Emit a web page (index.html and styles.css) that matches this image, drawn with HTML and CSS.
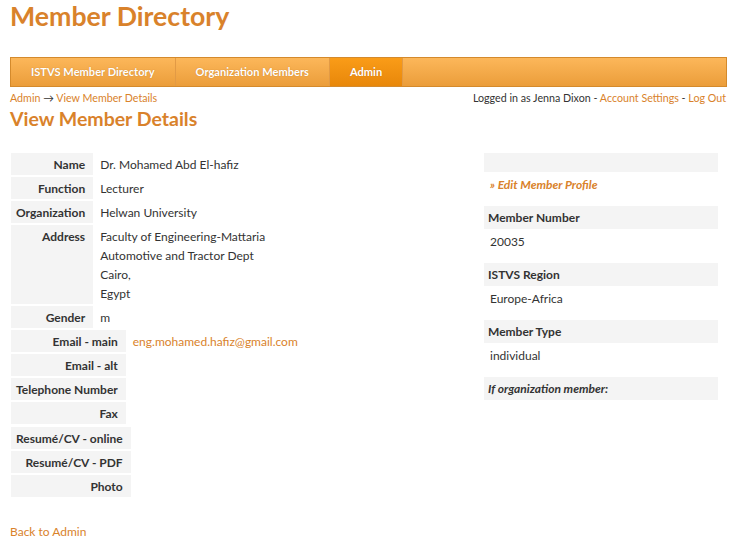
FILE: index.html
```html
<!DOCTYPE html>
<html lang="en">
<head>
    <meta charset="UTF-8">
    <title>Member Directory</title>
    <link rel="stylesheet" href="styles.css">
</head>
<body>
    <div class="page">
        <h1 class="site-title">Member Directory</h1>

        <ul class="main-nav">
            <li><a href="#">ISTVS Member Directory</a></li>
            <li><a href="#">Organization Members</a></li>
            <li class="active"><a href="#">Admin</a></li>
        </ul>

        <div class="topbar">
            <div class="breadcrumb"><a href="#">Admin</a> &rarr; <a href="#">View Member Details</a></div>
            <div class="user-info">Logged in as Jenna Dixon - <a href="#">Account Settings</a> - <a href="#">Log Out</a></div>
        </div>

        <h2 class="page-title">View Member Details</h2>

        <div class="details">
            <div class="details-main">
                <table class="info-table">
                    <tr><th>Name</th><td>Dr. Mohamed Abd El-hafiz</td></tr>
                    <tr><th>Function</th><td>Lecturer</td></tr>
                    <tr><th>Organization</th><td>Helwan University</td></tr>
                    <tr><th>Address</th><td>Faculty of Engineering-Mattaria<br>Automotive and Tractor Dept<br>Cairo,<br>Egypt</td></tr>
                    <tr><th>Gender</th><td>m</td></tr>
                </table>
                <table class="info-table">
                    <tr><th>Email - main</th><td><a href="#">eng.mohamed.hafiz@gmail.com</a></td></tr>
                    <tr><th>Email - alt</th><td></td></tr>
                    <tr><th>Telephone Number</th><td></td></tr>
                    <tr><th>Fax</th><td></td></tr>
                </table>
                <table class="info-table last">
                    <tr><th>Resumé/CV - online</th><td></td></tr>
                    <tr><th>Resumé/CV - PDF</th><td></td></tr>
                    <tr><th>Photo</th><td></td></tr>
                </table>
            </div>

            <div class="details-side">
                <div class="side-head empty"></div>
                <div class="side-value"><a class="edit-link" href="#">&raquo; Edit Member Profile</a></div>

                <div class="side-head">Member Number</div>
                <div class="side-value">20035</div>

                <div class="side-head">ISTVS Region</div>
                <div class="side-value">Europe-Africa</div>

                <div class="side-head">Member Type</div>
                <div class="side-value">individual</div>

                <div class="side-head italic">If organization member:</div>
            </div>
        </div>

        <p class="back"><a href="#">Back to Admin</a></p>
    </div>
</body>
</html>
```

FILE: styles.css
```css
:root {
    --orange: #d9822b;
    --text: #333333;
    --cell: #f4f4f4;
}

body {
    margin: 0;
    font-family: Lato, "Open Sans", sans-serif;
    font-size: 12px;
    color: var(--text);
    background: #ffffff;
}

a {
    color: var(--orange);
    text-decoration: none;
}

.page {
    padding: 0 10px;
}

.site-title {
    margin: 0;
    padding-top: 1px;
    font-size: 26.7px;
    line-height: 30px;
    font-weight: 700;
    color: var(--orange);
}

.main-nav {
    list-style: none;
    margin: 26px 0 0 0;
    padding: 0;
    display: flex;
    height: 28px;
    border: 1px solid #d48a2c;
    background: linear-gradient(to bottom, #fcb75a, #eb9d3a);
}

.main-nav li {
    border-right: 1px solid #e29a45;
}

.main-nav li a {
    display: block;
    line-height: 28px;
    padding: 0 20px;
    color: #ffffff;
    font-size: 11.1px;
    font-weight: 700;
    text-shadow: 0 0 1px rgba(150, 80, 0, 0.5);
}

.main-nav li.active {
    background: linear-gradient(to bottom, #fa9c18, #e8870a);
}

.topbar {
    display: flex;
    justify-content: space-between;
    font-size: 10.7px;
    line-height: 16px;
    margin-top: 3px;
}

.user-info {
    margin-right: 1px;
}

.page-title {
    margin: 1px 0 0 0;
    font-size: 19.5px;
    line-height: 24px;
    font-weight: 700;
    color: var(--orange);
}

.details {
    display: flex;
    justify-content: space-between;
    margin-top: 22px;
}

.info-table {
    border-collapse: separate;
    border-spacing: 1px 2px;
    margin: -2px 0 0 0;
}

.info-table.last {
    margin-top: -1px;
}

.info-table th {
    background: var(--cell);
    text-align: right;
    vertical-align: top;
    font-weight: 700;
    white-space: nowrap;
    padding: 2px 8px 1px 5px;
    line-height: 19px;
}

.info-table td {
    vertical-align: top;
    padding: 2px 5px 1px 6px;
    line-height: 19px;
}

.details-side {
    width: 234px;
    margin-right: 9px;
}

.side-head {
    background: var(--cell);
    font-weight: 700;
    line-height: 19px;
    padding: 2px 4px;
}

.side-head.empty {
    height: 19px;
    padding: 0;
}

.side-head.italic {
    font-style: italic;
}

.side-value {
    padding: 3px 6px 12px;
    line-height: 19px;
}

.edit-link {
    font-weight: 700;
    font-style: italic;
}

.back {
    margin: 23px 0 0 0;
    line-height: 19px;
}
```
